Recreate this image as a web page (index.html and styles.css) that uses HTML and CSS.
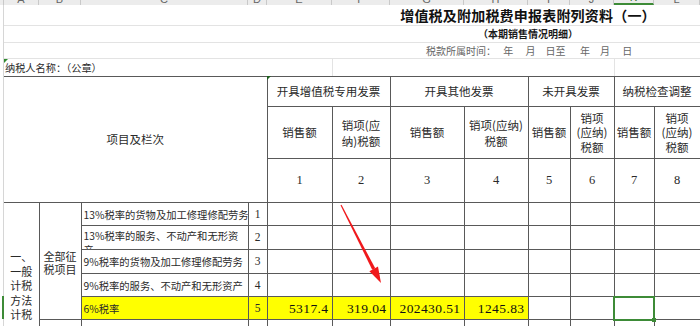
FILE: index.html
```html
<!DOCTYPE html>
<html lang="zh-CN">
<head>
<meta charset="utf-8">
<title>增值税及附加税费申报表附列资料（一）</title>
<link rel="stylesheet" href="styles.css">
</head>
<body>
<div class="colhdr">
  <span class="ch c0"></span>
  <span class="ch k1">A</span>
  <span class="ch k2">B</span>
  <span class="ch k3">C</span>
  <span class="ch k4">D</span>
  <span class="ch k5">E</span>
  <span class="ch k6">F</span>
  <span class="ch k7">G</span>
  <span class="ch k8">H</span>
  <span class="ch k9">I</span>
  <span class="ch k10">J</span>
  <span class="ch k11 on">K</span>
  <span class="ch k12">L</span>
</div>
<div class="sheet">
  <div class="prerow title">增值税及附加税费申报表附列资料（一）</div>
  <div class="prerow sub">（本期销售情况明细）</div>
  <div class="prerow period">税款所属时间：　 年　 月　日至　  年　月　 日</div>
  <div class="prerow taxpayer">
    <span class="tp">纳税人名称：（公章）</span>
    <span class="gl w1"></span>
    <span class="gl w2"></span>
  </div>
  <table class="form">
    <colgroup>
      <col class="k1"><col class="k2"><col class="k3"><col class="k4"><col class="k5"><col class="k6"><col class="k7"><col class="k8"><col class="k9"><col class="k10"><col class="k11"><col class="k12">
    </colgroup>
    <thead>
      <tr class="hA">
        <th colspan="4" rowspan="3" class="first">项目及栏次</th>
        <th colspan="2">开具增值税专用发票</th>
        <th colspan="2">开具其他发票</th>
        <th colspan="2">未开具发票</th>
        <th colspan="2">纳税检查调整</th>
      </tr>
      <tr class="hB">
        <th>销售额</th>
        <th class="l16">销项(应<br>纳)税额</th>
        <th>销售额</th>
        <th class="l16">销项(应纳)<br>税额</th>
        <th>销售额</th>
        <th class="l14">销项<br>(应纳)<br>税额</th>
        <th>销售额</th>
        <th class="l14">销项<br>(应纳)<br>税额</th>
      </tr>
      <tr class="hC">
        <th class="num">1</th><th class="num">2</th><th class="num">3</th><th class="num">4</th><th class="num">5</th><th class="num">6</th><th class="num">7</th><th class="num">8</th>
      </tr>
    </thead>
    <tbody>
      <tr class="r23">
        <td rowspan="7" class="first method">一、<br>一般<br>计税<br>方法<br>计税</td>
        <td rowspan="5" class="scope">全部征税项目</td>
        <td class="desc">13%税率的货物及加工修理修配劳务</td>
        <td class="idx">1</td>
        <td></td><td></td><td></td><td></td><td></td><td></td><td></td><td></td>
      </tr>
      <tr class="r24">
        <td class="desc"><div class="clip">13%税率的服务、不动产和无形资<br>产</div></td>
        <td class="idx">2</td>
        <td></td><td></td><td></td><td></td><td></td><td></td><td></td><td></td>
      </tr>
      <tr class="r24">
        <td class="desc">9%税率的货物及加工修理修配劳务</td>
        <td class="idx">3</td>
        <td></td><td></td><td></td><td></td><td></td><td></td><td></td><td></td>
      </tr>
      <tr class="r23">
        <td class="desc">9%税率的服务、不动产和无形资产</td>
        <td class="idx">4</td>
        <td></td><td></td><td></td><td></td><td></td><td></td><td></td><td></td>
      </tr>
      <tr class="r23">
        <td class="desc hl">6%税率</td>
        <td class="idx hl">5</td>
        <td class="val hl">5317.4</td>
        <td class="val hl">319.04</td>
        <td class="val hl">202430.51</td>
        <td class="val hl">1245.83</td>
        <td></td><td></td><td class="sel"></td><td></td>
      </tr>
      <tr class="r23">
        <td rowspan="2" class="scope">其中：即征即退项目</td>
        <td class="desc">即征即退货物及加工修理修配劳务</td>
        <td class="idx">6</td>
        <td></td><td></td><td></td><td></td><td></td><td></td><td></td><td></td>
      </tr>
      <tr class="r23">
        <td class="desc">即征即退服务、不动产和无形资产</td>
        <td class="idx">7</td>
        <td></td><td></td><td></td><td></td><td></td><td></td><td></td><td></td>
      </tr>
    </tbody>
  </table>
</div>
<svg class="overlay" width="700" height="326" viewBox="0 0 700 326" aria-hidden="true">
  <polygon points="341.5,204.7 375.2,268.3 372.2,269.7 340.5,205.3" fill="#f0191c"/>
  <polygon points="381,283 369.4,271.2 378,266.6" fill="#f0191c"/>
  <rect x="2" y="296" width="2" height="23" fill="#3d8b37"/>
  <polygon points="4,59 8,59 4,63" fill="#2f8a2f"/>
  <polygon points="267,76 271,76 267,80" fill="#1f5f1f"/>
</svg>
</body>
</html>
```

FILE: styles.css
```css
* { box-sizing: border-box; }

html, body {
  margin: 0;
  padding: 0;
}

body {
  width: 700px;
  height: 326px;
  overflow: hidden;
  background: #fff;
  position: relative;
  font-family: "Noto Sans CJK SC", "Noto Sans", sans-serif;
  color: #2a2a2a;
}

/* column letter strip (cut off at top) */
.colhdr {
  display: flex;
  height: 5px;
  background: #ececec;
  overflow: hidden;
}
.ch {
  flex: none;
  height: 5px;
  border-right: 1px solid #c9c9c9;
  display: flex;
  align-items: flex-end;
  justify-content: center;
  font: 11px/12px "Liberation Sans", sans-serif;
  color: #666;
}
.ch.on { border-bottom: 2px solid #3d8b37; color: #2f6f2a; }
.c0 { width: 4px; }
.ch.k1, col.k1 { width: 35px; }
.ch.k2, col.k2 { width: 42px; }
.ch.k3, col.k3 { width: 167px; }
.ch.k4, col.k4 { width: 19px; }
.ch.k5, col.k5 { width: 65px; }
.ch.k6, col.k6 { width: 58px; }
.ch.k7, col.k7 { width: 74px; }
.ch.k8, col.k8 { width: 64px; }
.ch.k9, col.k9 { width: 42px; }
.ch.k10, col.k10 { width: 44px; }
.ch.k11, col.k11 { width: 40px; }
.ch.k12, col.k12 { width: 46px; }

/* sheet body */
.sheet {
  margin-left: 3px;
  border-left: 1px solid #d6d6d6;
}

.prerow {
  display: flex;
  align-items: center;
  border-bottom: 1px solid #e3e3e3;
  white-space: pre;
}
.title {
  height: 21px;
  justify-content: center;
  padding-left: 352px;
  font-size: 14px;
  line-height: 16px;
  font-weight: bold;
  letter-spacing: 0.2px;
  color: #111;
}
.sub {
  height: 17px;
  justify-content: center;
  padding-left: 352px;
  font-size: 10px;
  line-height: 12px;
  font-weight: bold;
  color: #1a1a1a;
}
.period {
  height: 16px;
  padding-left: 422px;
  font-size: 10px;
  line-height: 12px;
  color: #666;
}
.taxpayer {
  height: 17px;
  border-bottom: 0;
  align-items: stretch;
}
.tp {
  flex: none;
  width: 328px;
  padding-left: 1px;
  font-size: 10.2px;
  line-height: 17px;
  color: #2a2a2a;
}
.gl { flex: none; border-left: 1px solid #e3e3e3; }
.gl.w1 { width: 282px; }
.gl.w2 { width: 86px; }

/* form table */
.form {
  border-collapse: collapse;
  table-layout: fixed;
  width: 696px;
}
.form th,
.form td {
  border: 1px solid #595959;
  padding: 0;
  font-weight: normal;
  font-size: 11.5px;
  line-height: 15px;
  text-align: center;
  vertical-align: middle;
  color: #2a2a2a;
  overflow: hidden;
}
.form .first { border-left: 0; }

.hA { height: 30px; }
.hB { height: 52px; }
.hC { height: 44px; }
.r23 { height: 23px; }
.r24 { height: 24px; }

.form .l16 { line-height: 16px; }
.form .l14 { line-height: 14.5px; }

.form .num {
  font-family: "Liberation Serif", serif;
  font-size: 12.5px;
}

.form .method {
  vertical-align: top;
  padding-top: 46px;
  font-size: 11px;
  line-height: 14.5px;
}
.form .scope {
  font-size: 11px;
  line-height: 13px;
  padding-top: 3px;
}
.form .desc {
  text-align: left;
  padding-left: 2px;
  font-size: 10.3px;
  line-height: 13px;
  white-space: nowrap;
}
.clip {
  height: 22px;
  overflow: hidden;
  padding-top: 2px;
  line-height: 14px;
}
.form .idx {
  font-family: "Liberation Serif", serif;
  font-size: 11.5px;
}
.form .val {
  text-align: right;
  padding-right: 3px;
  font-family: "Liberation Serif", serif;
  font-size: 13.5px;
  letter-spacing: 0.4px;
  color: #111;
}
.form .hl { background: #ffff00; }

.form .sel {
  border: 2px solid #3d8b37;
  position: relative;
  overflow: visible;
}
.form .sel::after {
  content: "";
  position: absolute;
  right: -3px;
  bottom: -3px;
  width: 4px;
  height: 4px;
  background: #3d8b37;
}

.overlay {
  position: absolute;
  left: 0;
  top: 0;
  pointer-events: none;
}
```
